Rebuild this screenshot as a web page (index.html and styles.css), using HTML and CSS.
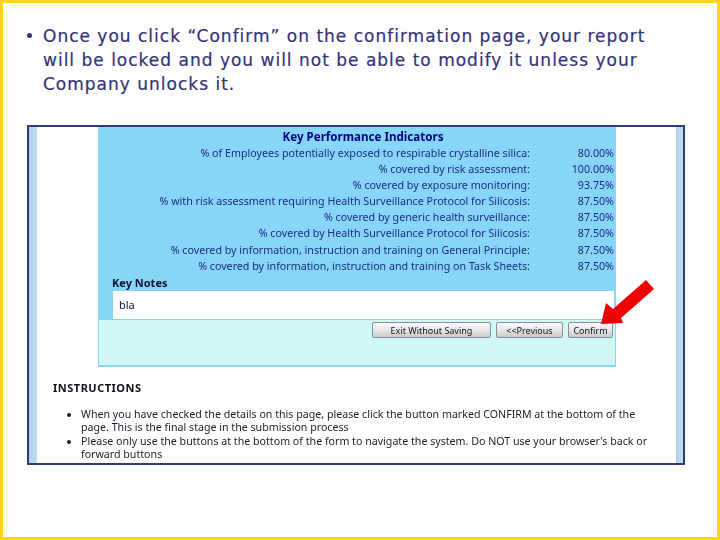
FILE: index.html
```html
<!DOCTYPE html>
<html lang="en">
<head>
<meta charset="utf-8">
<title>Confirm report</title>
<link rel="stylesheet" href="styles.css">
</head>
<body>
<main class="slide">
  <ul class="points">
    <li>Once you click “Confirm” on the confirmation page, your report will be locked and you will not be able to modify it unless your Company unlocks it.</li>
  </ul>
  <figure class="shot">
    <div class="strip"></div>
    <div class="page">
      <section class="panel">
        <div class="kpi">
          <h2>Key Performance Indicators</h2>
          <dl>
            <dt>% of Employees potentially exposed to respirable crystalline silica:</dt><dd>80.00%</dd>
            <dt>% covered by risk assessment:</dt><dd>100.00%</dd>
            <dt>% covered by exposure monitoring:</dt><dd>93.75%</dd>
            <dt>% with risk assessment requiring Health Surveillance Protocol for Silicosis:</dt><dd>87.50%</dd>
            <dt>% covered by generic health surveillance:</dt><dd>87.50%</dd>
            <dt>% covered by Health Surveillance Protocol for Silicosis:</dt><dd>87.50%</dd>
            <dt>% covered by information, instruction and training on General Principle:</dt><dd>87.50%</dd>
            <dt>% covered by information, instruction and training on Task Sheets:</dt><dd>87.50%</dd>
          </dl>
          <h3>Key Notes</h3>
          <div class="notes">bla</div>
        </div>
        <div class="actions">
          <button class="btn exit">Exit Without Saving</button>
          <button class="btn prev">&lt;&lt;Previous</button>
          <button class="btn confirm">Confirm</button>
        </div>
      </section>
      <section class="help">
        <h4>INSTRUCTIONS</h4>
        <ul>
          <li>When you have checked the details on this page, please click the button marked CONFIRM at the bottom of the page. This is the final stage in the submission process</li>
          <li>Please only use the buttons at the bottom of the form to navigate the system. Do NOT use your browser's back or forward buttons</li>
        </ul>
      </section>
    </div>
    <div class="strip"></div>
    <svg class="arrow" viewBox="0 0 60 50" width="60" height="50" aria-hidden="true">
      <polygon points="0,44 5,23 12,29 45,0 53,9 20,38 22,43" fill="#f00000"/>
    </svg>
  </figure>
</main>
</body>
</html>
```
FILE: styles.css
```css
* { box-sizing: border-box; }
html, body { margin: 0; padding: 0; }
body { width: 720px; height: 540px; overflow: hidden; background: #fff; }
.slide {
  width: 720px; height: 540px;
  border: 3px solid #ffd51e;
  padding: 21px 24px 0;
  font-family: "DejaVu Sans", sans-serif;
}
.points {
  margin: 0 0 0 16px; padding: 0;
  height: 101px;
  color: #33327a;
  font-size: 17px;
  line-height: 24px;
  letter-spacing: 1px;
  -webkit-text-stroke: 0.2px #33327a;
  list-style: none;
}
.points li { position: relative; width: 622px; }
.points li::before {
  content: ""; position: absolute;
  left: -16px; top: 9px;
  width: 5px; height: 5px; border-radius: 50%;
  background: #33327a;
}
.shot {
  position: relative;
  margin: 0;
  width: 658px; height: 340px;
  border: 2px solid #333a7a;
  display: flex;
  overflow: hidden;
  background: #fff;
}
.strip { width: 8px; flex: none; background: linear-gradient(90deg, #b0d2ea, #c0dff3); }
.strip:nth-of-type(3) { width: 7px; }
.page {
  flex: 1; min-width: 0;
  padding-left: 61px;
  font-family: "Noto Sans", sans-serif;
  font-size: 10.7px;
  filter: blur(0.3px);
}
.panel {
  width: 518px; height: 240px;
  background: #d0f8f8;
  border: solid #87d5f7; border-width: 0 1px 2px;
  display: flex; flex-direction: column;
}
.kpi { background: #87d5f7; height: 193px; }
.kpi h2 {
  margin: 0; padding: 2px 0 0 12px;
  height: 18px;
  font-size: 11.6px; line-height: 15px;
  text-align: center; color: #000080;
  font-weight: 700;
}
.kpi dl {
  margin: 0;
  display: grid; grid-template-columns: 431px 84px;
  grid-auto-rows: 16.1px;
  color: #1c2a86;
  line-height: 16px;
}
.kpi dt { text-align: right; white-space: nowrap; }
.kpi dd { margin: 0; text-align: right; }
.kpi h3 {
  margin: 0 0 0 13px;
  height: 17px;
  font-size: 11px; line-height: 17px;
  font-weight: 700; color: #0b1330;
}
.notes {
  margin: 0 1px 0 14px;
  height: 28px;
  background: #fff;
  padding-left: 6px;
  color: #10163a;
  font-size: 11px; line-height: 28px;
}
.actions {
  display: flex; gap: 5px;
  justify-content: flex-end;
  padding: 2px 2px 0 0;
}
.btn {
  height: 16px; padding: 0;
  border: 1px solid #8a8f95;
  border-radius: 2px;
  background: linear-gradient(#fafafa, #e8e8e8 50%, #c9c9c9);
  font-family: "Noto Sans", sans-serif;
  font-size: 9px; line-height: 13px;
  color: #111;
}
.exit { width: 119px; }
.prev { width: 67px; }
.confirm { width: 45px; }
.help { padding: 14px 0 0; color: #1d1d2a; }
.help h4 {
  margin: 0 0 0 -45px;
  font-size: 11px; line-height: 14px; font-weight: 700; color: #101020;
  letter-spacing: 0.5px;
}
.help ul {
  margin: 13px 0 0 -17px; padding: 0;
  width: 572px;
  line-height: 13.4px;
  font-size: 10.65px;
}
.arrow { position: absolute; left: 572px; top: 153px; }
```
